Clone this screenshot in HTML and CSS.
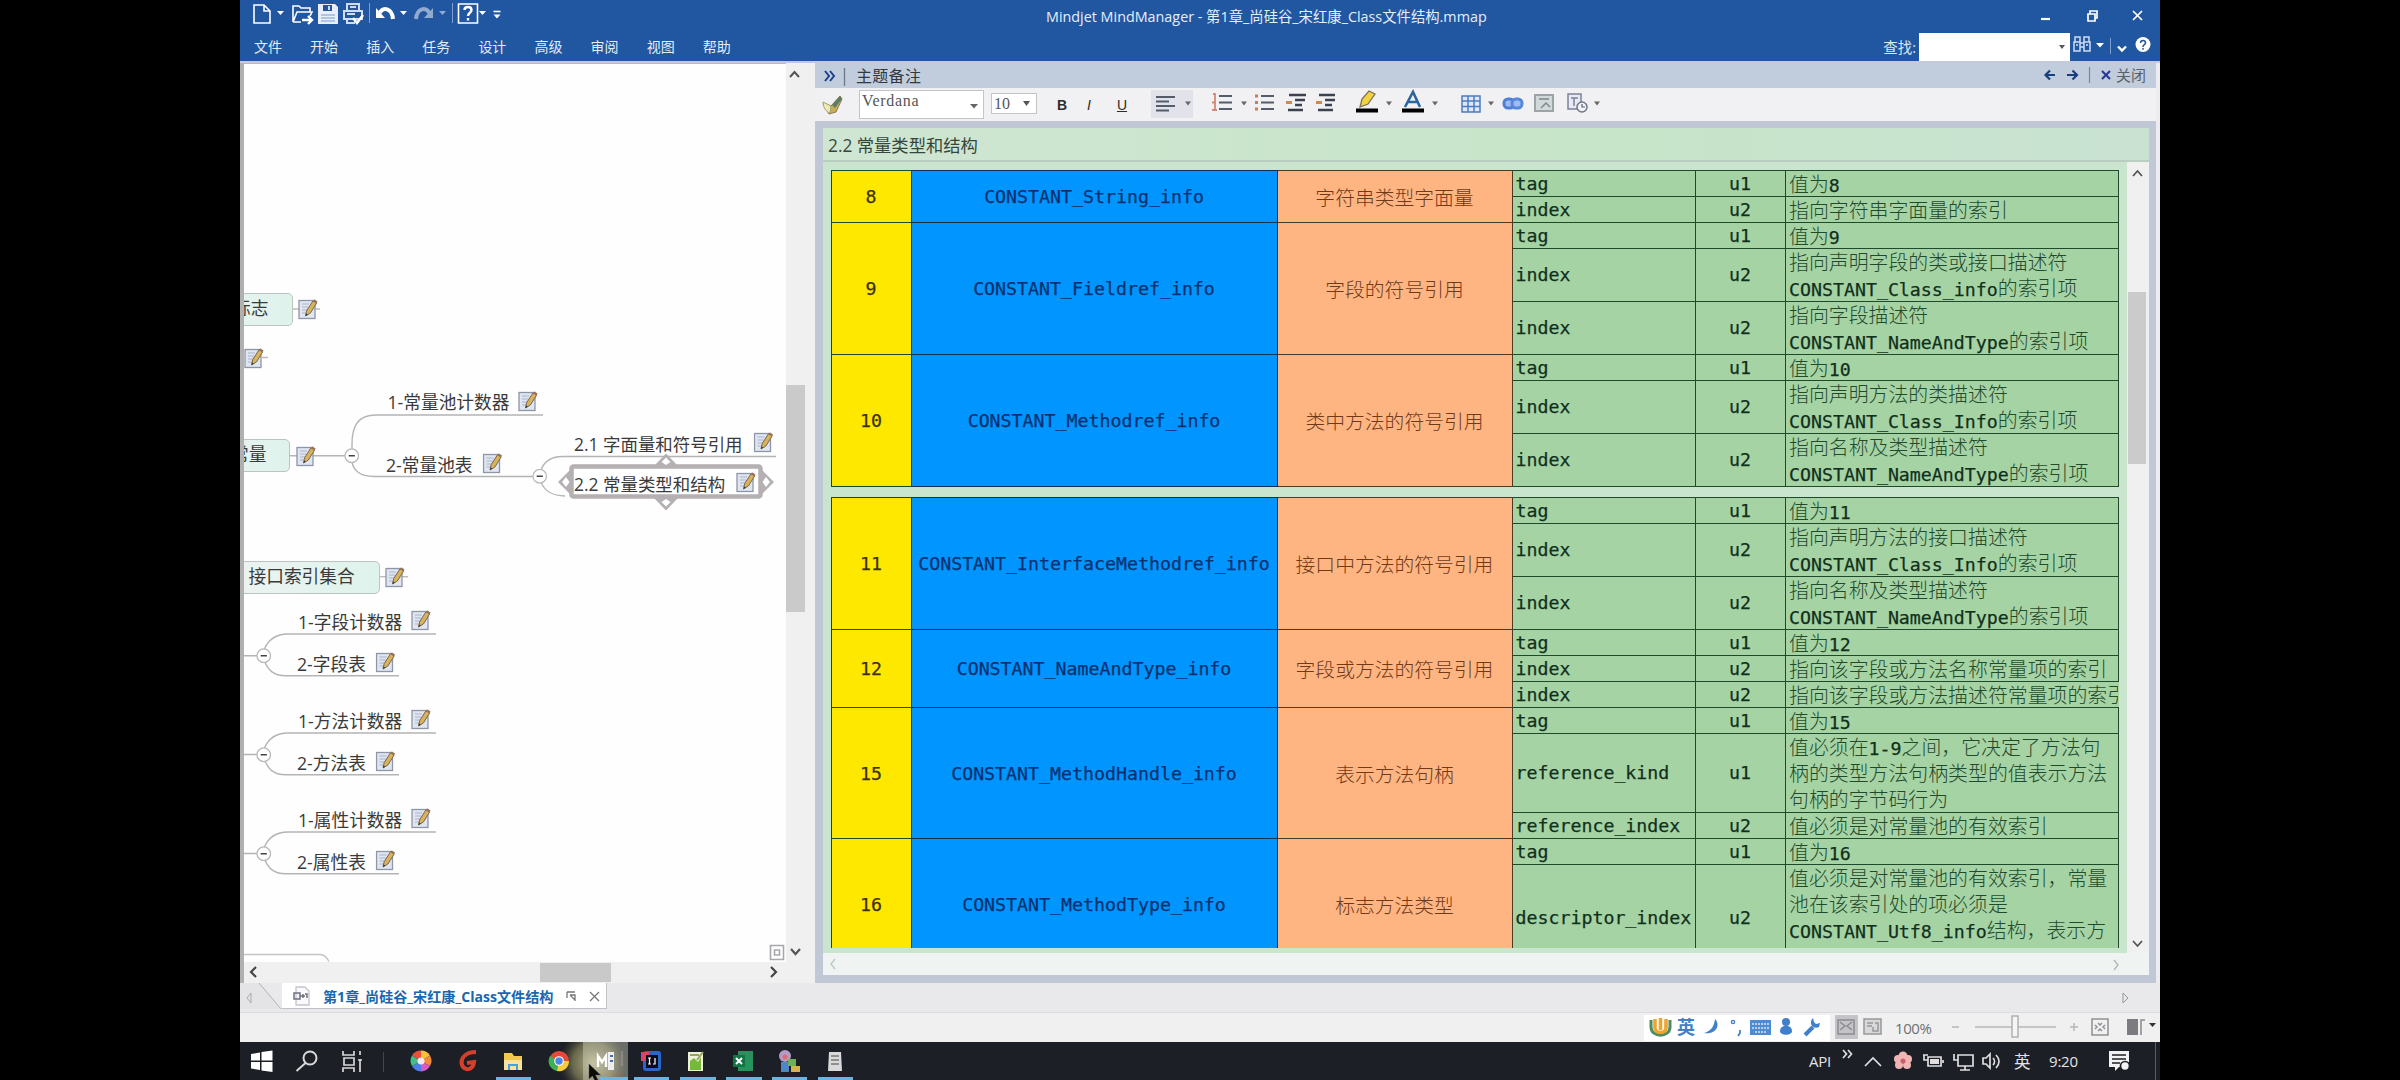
FILE: index.html
```html
<!DOCTYPE html>
<html lang="zh-CN">
<head>
<meta charset="utf-8">
<title>Mindjet MindManager</title>
<link rel="stylesheet" href="styles.css">
</head>
<body>
<svg width="0" height="0" class="defs">
  <defs>
    <symbol id="note" viewBox="0 0 20 21">
      <rect x="1" y="1.5" width="16" height="18" fill="#dfe5f1" stroke="#8e95a6" stroke-width="1.3"/>
      <path d="M4 5h7M4 8h6M4 11h5M4 14h4" stroke="#a9b3cb" stroke-width="1"/>
      <path d="M7.500 17l1.200-5.400L15 1.800l3.600 2.200L12.400 14z" fill="#d9b25c" stroke="#75664f" stroke-width="1"/>
      <path d="M15 2l1.200-1.600 3.400 2-1 1.800z" fill="#a0705a"/>
      <path d="M7.500 17l.6-2.500 1.700 1.100z" fill="#333"/>
    </symbol>
    <symbol id="minus" viewBox="0 0 16 16">
      <circle cx="8" cy="8" r="7" fill="#fff" stroke="#b9b9b9" stroke-width="1.3"/>
      <path d="M4.8 8h6.4" stroke="#444" stroke-width="1.8"/>
    </symbol>
  </defs>
</svg>

<div class="window">
  <header class="ribbon">
    <div class="titlerow">
      <svg class="quick" width="256" height="32" viewBox="0 0 256 32" fill="none" stroke="#fff" stroke-width="1.6">
        <path d="M2 5h10l6 6v12H2zM12 5v6h6"/>
        <path d="M25 11h7l-3.500 4z" fill="#fff" stroke="none"/>
        <path d="M41 22V6h6l2 2h9v4M41 22l4-10h15l-2 4M41 22h8"/>
        <path d="M50 20h9M56 16l4 4-4 4" stroke-width="2.400"/>
        <path d="M66 4h17l3 3v17H66z" fill="#e8effb" stroke="none"/>
        <path d="M71 5h9v6h-9z" fill="#23559f" stroke="none"/><path d="M77 6v4"/><path d="M69 15h14M69 18h14M69 21h14" stroke="#7a99cc" stroke-width="1"/>
        <path d="M95 11V4h12v7M92 11h18v8H92zM95 19v4h8M98 7h6M95 14h8" stroke="#cfdcf2" stroke-width="2"/>
        <path d="M101 18l4 5 6-8" stroke-width="2.600"/>
        <path d="M117.500 3v20" stroke="#7f9fd2" stroke-width="1"/>
        <path d="M127 14c4-8 13-6 14 5" stroke-width="4"/><path d="M124 8v10h9z" fill="#fff" stroke="none"/>
        <path d="M148 11h7l-3.500 4z" fill="#fff" stroke="none"/>
        <g opacity=".5"><path d="M178 14c-4-8-13-6-14 5" stroke-width="4"/><path d="M181 8v10h-9z" fill="#fff" stroke="none"/><path d="M187 11h7l-3.500 4z" fill="#fff" stroke="none"/></g>
        <path d="M200.500 3v20" stroke="#7f9fd2" stroke-width="1"/>
        <path d="M206.500 4h19v19h-19z"/>
        <path d="M212.500 10c0-4 7-4 7 0 0 3-3.500 2.500-3.500 6M216 18v2.500" stroke-width="2.400"/>
        <path d="M227 11h7l-3.500 4zM241.500 14.500h7l-3.500 4z" fill="#fff" stroke="none"/><path d="M241.500 11.500h7"/>
      </svg>
      <div class="apptitle">Mindjet MindManager - 第1章_尚硅谷_宋红康_Class文件结构.mmap</div>
      <svg class="winbtns" width="120" height="32" viewBox="0 0 120 32" fill="none" stroke="#fff" stroke-width="1.700">
        <path d="M1 19h9" stroke-width="2.200"/>
        <path d="M48 14h7v7h-7zM50 14v-3h7v7h-2"/>
        <path d="M93 11l9 9M102 11l-9 9"/>
      </svg>
    </div>
    <div class="menurow">
      <nav class="menu"><span>文件</span><span>开始</span><span>插入</span><span>任务</span><span>设计</span><span>高级</span><span>审阅</span><span>视图</span><span>帮助</span></nav>
      <div class="find">
        <span>查找:</span>
        <div class="findbox"><svg width="8" height="6"><path d="M1 1h6L4 5z" fill="#555"/></svg></div>
        <svg width="86" height="28" viewBox="3 0 86 28" fill="none" stroke="#fff" stroke-width="1.500">
          <path d="M5 4h5v5H5zM14 4h5v5h-5zM4 9h6v9H4zM14 9h6v9h-6zM10 10h4M10 14h4M6 12h2M16 12h2" stroke="#cfdcf2"/>
          <path d="M26 10h8l-4 4.500z" fill="#fff" stroke="none"/>
          <path d="M40.500 5v16" stroke="#7f9fd2" stroke-width="1"/>
          <path d="M48 13.500l4 4 4-4" stroke-width="2.400"/>
          <circle cx="73" cy="11.500" r="7.500" fill="#fff" stroke="none"/>
          <path d="M70.500 10c0-3.500 5-3.500 5 0 0 2-2.500 1.500-2.500 4M73 15v1.800" stroke="#23559f"/>
        </svg>
      </div>
    </div>
  </header>

  <main class="main">
    <section class="mappane">
      <div class="maprow">
        <div class="canvas">
          <svg class="links" width="542" height="899" viewBox="244 63 542 899" fill="none" stroke="#b4b4b4" stroke-width="1.400">
            <path d="M292 309h28M262 357.500h6" stroke="#c2b8b4"/>
            <path d="M290 455.700h62M352 450v-6c0-18 6-29 24-29h167M352 460c0 10 8 16.500 22 16.500h166"/>
            <path d="M541 470c3-8 10-13.500 22-13.500h213M541 482c3 8 11 14 24 14"/>
            <path d="M379 576.700h29" stroke="#c2b8b4"/>
            <path d="M244 655.700h20M264 650c4-10 11-16 24-16h148M264 660c4 10 9 15.700 22 15.700h113"/>
            <path d="M244 754.500h20M264 749c4-10 11-16 24-16h148M264 759c4 10 9 15.700 22 15.700h113"/>
            <path d="M244 853.500h20M264 848c4-10 11-16 24-16h148M264 858c4 10 9 15.700 22 15.700h113"/>
            <path d="M244 954.500h76c5 0 7 3 9 7" stroke="#c4c4c4"/>
            <use href="#minus" x="344" y="448" width="15.500" height="15.500"/>
            <use href="#minus" x="532" y="468.500" width="15.500" height="15.500"/>
            <use href="#minus" x="256" y="648" width="15.500" height="15.500"/>
            <use href="#minus" x="256" y="747" width="15.500" height="15.500"/>
            <use href="#minus" x="256" y="846" width="15.500" height="15.500"/>
            <g fill="#b5b0b3" stroke="none">
              <path d="M571 469l-13 13 13 13zM761 469l13 13-13 13zM654 466l12-12.500 12 12.500zM654 498l12 12.500 12-12.500z"/>
            </g>
            <rect x="571.500" y="466.500" width="189" height="30" rx="2" fill="#fff" stroke="#b5b0b3" stroke-width="4.500"/>
            <path d="M566 477l3.500 5-3.500 5-4-5zM766 477l4 5-4 5-3.500-5zM661.500 462l4.500-4.500 4.500 4.500-4.500 3zM661.500 502l4.500-3 4.500 3-4.500 4.500z" fill="#fff" stroke="none"/>
          </svg>
          <div class="node box n1">标志</div>
          <div class="node box n2">常量</div>
          <div class="node box n3">接口索引集合</div>
          <div class="node n4">1-常量池计数器</div>
          <div class="node n5">2-常量池表</div>
          <div class="node n6">2.1 字面量和符号引用</div>
          <div class="node n7">2.2 常量类型和结构</div>
          <div class="node n8">1-字段计数器</div>
          <div class="node n9">2-字段表</div>
          <div class="node n10">1-方法计数器</div>
          <div class="node n11">2-方法表</div>
          <div class="node n12">1-属性计数器</div>
          <div class="node n13">2-属性表</div>
          <svg class="links" width="542" height="899" viewBox="244 63 542 899">
            <use href="#note" x="298" y="299" width="20" height="21"/>
            <use href="#note" x="244" y="348" width="20" height="21"/>
            <use href="#note" x="296" y="446" width="20" height="21"/>
            <use href="#note" x="518" y="391" width="20" height="21"/>
            <use href="#note" x="482.500" y="453" width="20" height="21"/>
            <use href="#note" x="753.500" y="432" width="20" height="21"/>
            <use href="#note" x="736" y="472" width="20" height="21"/>
            <use href="#note" x="385" y="567" width="20" height="21"/>
            <use href="#note" x="411" y="610" width="20" height="21"/>
            <use href="#note" x="375.500" y="652" width="20" height="21"/>
            <use href="#note" x="411" y="709" width="20" height="21"/>
            <use href="#note" x="375.500" y="751" width="20" height="21"/>
            <use href="#note" x="411" y="808" width="20" height="21"/>
            <use href="#note" x="375.500" y="850" width="20" height="21"/>
            <path d="M770.500 945.500h13v14h-13zM774.500 950h5v5h-5z" fill="none" stroke="#a7a7ad" stroke-width="1.600"/>
          </svg>
        </div>
        <div class="vscroll">
          <svg width="18" height="18" fill="none" stroke="#555" stroke-width="2"><path d="M4 14l4.500-5 4.500 5"/></svg>
          <div class="vthumb"></div>
          <svg class="end" width="18" height="18" fill="none" stroke="#555" stroke-width="2.200"><path d="M5 5l4.500 5L14 5"/></svg>
        </div>
      </div>
      <div class="hscroll">
        <svg width="20" height="20" fill="none" stroke="#444" stroke-width="2.200"><path d="M12 5l-5 5 5 5"/></svg>
        <div class="hthumb"></div>
        <svg class="right" width="20" height="20" fill="none" stroke="#444" stroke-width="2.200"><path d="M7 5l5 5-5 5"/></svg>
      </div>
    </section>

    <section class="notes">
      <div class="nhead">
        <svg width="34" height="24" fill="none" stroke="#1d3f8c" stroke-width="2"><path d="M10 7l4 5-4 5M15 7l4 5-4 5"/><path d="M29.500 4v18" stroke="#6c7788" stroke-width="1.300"/></svg>
        <span class="ntitle">主题备注</span>
        <svg class="nav" width="74" height="24" fill="none" stroke="#173f80" stroke-width="2.200"><path d="M15 12H5M10 7.500L5.500 12l4.500 4.500M27 12h10M32.500 7.500L37 12l-4.500 4.500"/><path d="M49.500 4v16" stroke="#7c8694" stroke-width="1.200"/><path d="M62 8l8 8M70 8l-8 8" stroke="#2a3a94"/></svg>
        <span class="nclose">关闭</span>
      </div>
      <div class="ntools">
        <svg class="brush" width="24" height="24"><path d="M2 10l8 3 9-10 2 3-6 13-7 2z" fill="#c9ad57" stroke="#8b7a4b"/><path d="M2 9l8 4-1 7c-4-1-7-6-7-11z" fill="#eceab8" stroke="#a8a06a"/><path d="M11 12l8-9 2 3-7 9z" fill="#5d7d69"/></svg>
        <div class="combo c1"><span>Verdana</span><svg width="8" height="6"><path d="M0 1h8L4 5.500z" fill="#666"/></svg></div>
        <div class="combo c2"><span>10</span><svg width="8" height="6"><path d="M0 0h7L3.500 5z" fill="#555"/></svg></div>
        <b class="f fb">B</b><i class="f fi">I</i><u class="f fu">U</u>
        <svg class="tools" width="464" height="33" viewBox="1146 88 464 33" fill="none" stroke="#555d6b" stroke-width="2">
          <rect x="1151" y="90" width="42" height="28" fill="#e2e3ea" stroke="none"/>
          <path d="M1156 97h19M1156 101.500h13M1156 106h19M1156 110.500h13"/>
          <path d="M1219 96h13M1219 102.500h13M1219 109h13M1261 96h13M1261 102.500h13M1261 109h13"/>
          <path d="M1213 94h2v16M1212 110h5M1212 102.500h4" stroke="#d28a74" stroke-width="1.800"/>
          <path d="M1255 96h3M1255 102.500h3M1255 109h3" stroke="#c87f55" stroke-width="3"/>
          <path d="M1289 95h17M1295 100h10M1295 105h7M1288 110h15M1319 95h16M1325 100h10M1325 105h7M1318 110h15" stroke="#3c4250" stroke-width="2.400"/>
          <path d="M1292 102.500h-6M1316 102.500h6" stroke="#d1894a" stroke-width="3"/>
          <path d="M1360 107l2-8 7-8 6 3-7 10z" fill="#f0d33f" stroke="#7d715b" stroke-width="1.300"/>
          <path d="M1356 110.500h22M1402 110.500h22" stroke="#000" stroke-width="4"/>
          <path d="M1405 107l8-15 7 15M1408 102h9" stroke="#2a659d" stroke-width="2.600"/>
          <path d="M1462 96h18v16h-18zM1462 101h18M1462 106.500h18M1468 96v16M1474 96v16" stroke="#4e7bbf" stroke-width="1.500" fill="#dce9fb"/>
          <rect x="1504" y="99" width="10" height="9" rx="4" fill="#9dbcf0" stroke="#4d7fd4" stroke-width="3"/><rect x="1512" y="99" width="10" height="9" rx="4" fill="#9dbcf0" stroke="#5587dc" stroke-width="3"/>
          <path d="M1535 95h18v16h-18z" stroke="#9ba5a8" fill="#d2d9d9"/><path d="M1539 99h10M1541 108l5-5 4 4" stroke="#7d898f" stroke-width="1.500"/>
          <path d="M1568 94h13v15h-13zM1571 98h7M1574 98v8" stroke="#7b819a" stroke-width="1.500" fill="#e8ebf5"/><circle cx="1582" cy="107" r="5" fill="#f4f4f8" stroke="#6f7486" stroke-width="1.500"/><path d="M1582 104v3h3" stroke-width="1.200"/>
          <path d="M1185 101.500h6l-3 4zM1241 101.500h6l-3 4zM1386 101.500h6l-3 4zM1432 101.500h6l-3 4zM1488 101.500h6l-3 4zM1594 101.500h6l-3 4z" fill="#666" stroke="none"/>
        </svg>
      </div>
      <div class="nbody">
        <div class="nheading">2.2 常量类型和结构</div>
        <div class="nview">
          <div class="ntables">
            <table>
              <colgroup><col class="k1"><col class="k2"><col class="k3"><col class="k4"><col class="k5"><col class="k6"></colgroup>
              <tr class="h1"><td class="num" rowspan="2">8</td><td class="name" rowspan="2">CONSTANT_String_info</td><td class="desc" rowspan="2">字符串类型字面量</td><td class="fld">tag</td><td class="sz">u1</td><td class="txt">值为<code>8</code></td></tr>
              <tr class="h1"><td class="fld">index</td><td class="sz">u2</td><td class="txt">指向字符串字面量的索引</td></tr>
              <tr class="h1"><td class="num" rowspan="3">9</td><td class="name" rowspan="3">CONSTANT_Fieldref_info</td><td class="desc" rowspan="3">字段的符号引用</td><td class="fld">tag</td><td class="sz">u1</td><td class="txt">值为<code>9</code></td></tr>
              <tr class="h2"><td class="fld">index</td><td class="sz">u2</td><td class="txt">指向声明字段的类或接口描述符<br><code>CONSTANT_Class_info</code>的索引项</td></tr>
              <tr class="h2"><td class="fld">index</td><td class="sz">u2</td><td class="txt">指向字段描述符<br><code>CONSTANT_NameAndType</code>的索引项</td></tr>
              <tr class="h1"><td class="num" rowspan="3">10</td><td class="name" rowspan="3">CONSTANT_Methodref_info</td><td class="desc" rowspan="3">类中方法的符号引用</td><td class="fld">tag</td><td class="sz">u1</td><td class="txt">值为<code>10</code></td></tr>
              <tr class="h2"><td class="fld">index</td><td class="sz">u2</td><td class="txt">指向声明方法的类描述符<br><code>CONSTANT_Class_Info</code>的索引项</td></tr>
              <tr class="h2"><td class="fld">index</td><td class="sz">u2</td><td class="txt">指向名称及类型描述符<br><code>CONSTANT_NameAndType</code>的索引项</td></tr>
            </table>
            <table>
              <colgroup><col class="k1"><col class="k2"><col class="k3"><col class="k4"><col class="k5"><col class="k6"></colgroup>
              <tr class="h1"><td class="num" rowspan="3">11</td><td class="name" rowspan="3">CONSTANT_InterfaceMethodref_info</td><td class="desc" rowspan="3">接口中方法的符号引用</td><td class="fld">tag</td><td class="sz">u1</td><td class="txt">值为<code>11</code></td></tr>
              <tr class="h2"><td class="fld">index</td><td class="sz">u2</td><td class="txt">指向声明方法的接口描述符<br><code>CONSTANT_Class_Info</code>的索引项</td></tr>
              <tr class="h2"><td class="fld">index</td><td class="sz">u2</td><td class="txt">指向名称及类型描述符<br><code>CONSTANT_NameAndType</code>的索引项</td></tr>
              <tr class="h1"><td class="num" rowspan="3">12</td><td class="name" rowspan="3">CONSTANT_NameAndType_info</td><td class="desc" rowspan="3">字段或方法的符号引用</td><td class="fld">tag</td><td class="sz">u1</td><td class="txt">值为<code>12</code></td></tr>
              <tr class="h1"><td class="fld">index</td><td class="sz">u2</td><td class="txt">指向该字段或方法名称常量项的索引</td></tr>
              <tr class="h1"><td class="fld">index</td><td class="sz">u2</td><td class="txt spill">指向该字段或方法描述符常量项的索引</td></tr>
              <tr class="h1"><td class="num" rowspan="3">15</td><td class="name" rowspan="3">CONSTANT_MethodHandle_info</td><td class="desc" rowspan="3">表示方法句柄</td><td class="fld">tag</td><td class="sz">u1</td><td class="txt">值为<code>15</code></td></tr>
              <tr class="h3"><td class="fld">reference_kind</td><td class="sz">u1</td><td class="txt">值必须在<code>1-9</code>之间，它决定了方法句<br>柄的类型方法句柄类型的值表示方法<br>句柄的字节码行为</td></tr>
              <tr class="h1"><td class="fld">reference_index</td><td class="sz">u2</td><td class="txt">值必须是对常量池的有效索引</td></tr>
              <tr class="h1"><td class="num" rowspan="2">16</td><td class="name" rowspan="2">CONSTANT_MethodType_info</td><td class="desc" rowspan="2">标志方法类型</td><td class="fld">tag</td><td class="sz">u1</td><td class="txt">值为<code>16</code></td></tr>
              <tr class="h4"><td class="fld">descriptor_index</td><td class="sz">u2</td><td class="txt top">值必须是对常量池的有效索引，常量<br>池在该索引处的项必须是<br><code>CONSTANT_Utf8_info</code>结构，表示方</td></tr>
            </table>
          </div>
          <div class="nvscroll">
            <svg width="20" height="20" fill="none" stroke="#555" stroke-width="1.800"><path d="M6 14l4.500-5 4.500 5"/></svg>
            <div class="nthumb"></div>
            <svg class="end" width="20" height="20" fill="none" stroke="#555" stroke-width="1.800"><path d="M6 8l4.500 5L15 8"/></svg>
          </div>
        </div>
        <div class="nhscroll">
          <svg width="18" height="20" fill="none" stroke="#bccabf" stroke-width="1.400"><path d="M12 5l-4 5 4 5"/></svg>
          <svg width="18" height="20" fill="none" stroke="#b3b8b8" stroke-width="1.400"><path d="M8 6l4 5-4 5"/></svg>
        </div>
      </div>
    </section>
  </main>

  <div class="tabs">
    <svg class="tableft" width="42" height="26"><path d="M0 0h20l22 26H0z" fill="#e4e4e6"/><path d="M19 0l22 26" stroke="#b5b5b8" fill="none"/><path d="M11 10l-4 5 4 5z" fill="none" stroke="#aaa"/></svg>
    <div class="tab">
      <svg width="20" height="20" fill="none" stroke="#8d8f9c" stroke-width="1.300"><path d="M4 1h9l4 4v14H4z" fill="#fafafc" stroke="#c3c5cd"/><path d="M2 7h6v6H2zM8 10h5M11 8v4M13 8h2v4" stroke="#6f7080" stroke-width="1.500"/></svg>
      <span>第1章_尚硅谷_宋红康_Class文件结构</span>
      <svg class="tabx" width="44" height="20" fill="none" stroke="#777" stroke-width="1.300"><path d="M5 6h8M5 6v6M8 9h5v6M8 9l5 5"/><path d="M28 6l9 9M37 6l-9 9"/></svg>
    </div>
    <svg class="tabright" width="12" height="14"><path d="M3 2l5 5-5 5z" fill="none" stroke="#999"/></svg>
  </div>

  <div class="status">
    <svg class="ime" width="186" height="26" viewBox="1644 1016 186 26" fill="none" stroke="#4080c8" stroke-width="2">
      <path d="M1651 1021v7c0 11 19 11 19 0v-7" stroke="#508a63" stroke-width="3"/>
      <path d="M1655 1020v9c0 6 11 6 11 0v-9M1660.500 1019v12" stroke="#eca52d" stroke-width="3.600"/>
      <text x="1677" y="1035" class="imetext">英</text>
      <path d="M1715 1020c6 6 1 16-11 14 7-2 10-6 11-14z" fill="#4080c8" stroke="none"/>
      <circle cx="1733" cy="1023" r="1.600" stroke-width="1.400"/><path d="M1740 1031v3l-2 3" stroke-width="1.800"/>
      <rect x="1750" y="1021" width="21" height="15" fill="#4f8bd0" stroke="none"/><path d="M1752 1025h17M1752 1029h17M1755 1033h11" stroke="#d6e6f8" stroke-width="1.300" stroke-dasharray="2 1"/>
      <circle cx="1786" cy="1023" r="4" fill="#4080c8" stroke="none"/><path d="M1780 1032c0-7 12-7 12 0 0 5-12 5-12 0z" fill="#4080c8" stroke="none"/>
      <path d="M1805 1036l8-8" stroke-width="4"/><path d="M1813 1019c-5 5 0 12 6 9l1-4-4 1-2-2z" fill="#4080c8" stroke="none"/>
    </svg>
    <svg class="views" width="60" height="26" viewBox="1830 1016 60 26" fill="none" stroke="#97979b" stroke-width="1.500">
      <rect x="1835" y="1016" width="23" height="24" fill="#c4c4c8" stroke="none"/>
      <path d="M1838 1021h16v14h-16zM1840 1023l5 4-5 4M1852 1023l-5 4 5 4" stroke="#8c8c90"/>
      <path d="M1864 1020h17v15h-17zM1867 1024h6M1867 1027h5M1875 1024h3v8h-5v-4" fill="#d8d8da"/>
    </svg>
    <span class="zoom">100%</span>
    <svg class="slider" width="216" height="26" viewBox="1944 1016 216 26" fill="none" stroke="#b7b7b9" stroke-width="1.500">
      <path d="M1952 1028h7M2070 1028h8M2074 1024v8M1975 1028h81"/>
      <rect x="2012" y="1017" width="6" height="21" fill="#f5f5f5" stroke="#b0b0b2"/>
      <path d="M2092 1020h16v16h-16zM2098 1024l2 2 2-2M2098 1032l2-2 2 2M2095 1026l2 2-2 2M2105 1026l-2 2 2 2" stroke="#909094"/>
      <path d="M2127 1020h11v16h-11z" fill="#7b7b80" stroke="none"/><path d="M2141 1036v-15h4" stroke="#88888c"/>
      <path d="M2149 1024h7l-3.500 4z" fill="#333" stroke="none"/>
    </svg>
  </div>

  <footer class="taskbar">
    <svg width="620" height="38" viewBox="240 1042 620 38" fill="none" stroke="#d8d8d8" stroke-width="2">
      <defs><radialGradient id="halo"><stop offset="0" stop-color="#b7b38c"/><stop offset=".6" stop-color="#7c7a55" stop-opacity=".8"/><stop offset="1" stop-color="#4e4e35" stop-opacity="0"/></radialGradient></defs>
      <path d="M251 1054l9-1.500v8h-9zM261.500 1052l11-1.500v10h-11zM251 1062h9v8l-9-1.500zM261.500 1062h11v10l-11-1.500z" fill="#fff" stroke="none"/>
      <circle cx="310" cy="1058" r="6.500"/><path d="M305.500 1063l-9 8"/>
      <path d="M343 1051v4h11v-4M344 1058h10v7h-10zM343 1072v-4h11v4M360 1051v4M360 1059v13M358 1060h4" stroke-width="1.700"/>
      <path d="M383.500 1052v20" stroke="#45454c" stroke-width="1"/>
      <g stroke="none">
        <path d="M421 1061L421 1050.500a10.500 10.500 0 0 1 9 5z" fill="#f5c13c"/><path d="M421 1061l9-5.500a10.500 10.500 0 0 1 0 10.500z" fill="#f58b3a"/><path d="M421 1061l9 5a10.500 10.500 0 0 1-9 5.500z" fill="#d95ac4"/><path d="M421 1061v10.500a10.500 10.500 0 0 1-9-5.500z" fill="#4a7ee8"/><path d="M421 1061l-9 5a10.500 10.500 0 0 1 0-10.500z" fill="#45bf8a"/><path d="M421 1061l-9-5.500a10.500 10.500 0 0 1 9-5z" fill="#e8503c"/><circle cx="421" cy="1061" r="3.500" fill="#f4e9ee"/>
      </g>
      <path d="M476 1052c-10 0-16 6-14 13 2 6 11 6 12-3l-7 1" stroke="#d4402a" stroke-width="4"/>
      <path d="M504 1053h8l2 3h8v14h-18z" fill="#f2c94e" stroke="none"/><path d="M504 1060h18v10h-18z" fill="#fbe29a" stroke="none"/><path d="M509 1070v-5h8v5" stroke="#4a9de0"/>
      <circle cx="593" cy="1063" r="34" fill="url(#halo)" stroke="none"/>
      <rect x="583" y="1042" width="45" height="38" fill="#d9d9c6" fill-opacity=".42" stroke="none"/>
      <g stroke="none"><circle cx="559" cy="1061" r="10" fill="#e5493a"/><path d="M559 1061l-9-5a10 10 0 0 0 7 15z" fill="#3fae55"/><path d="M559 1061h10a10 10 0 0 1-12 10z" fill="#f5cc3e"/><circle cx="559" cy="1061" r="4.800" fill="#fff"/><circle cx="559" cy="1061" r="3.700" fill="#4a86e8"/></g>
      <path d="M598 1067v-11l4 6 4-6v11" stroke="#fff" stroke-width="2.400"/><path d="M608 1052h6v18h-6z" fill="#eee" stroke="none"/><path d="M610 1056h3M610 1061h3" stroke="#4b6ea8"/>
      <path d="M622 1051v15" stroke="#8a8a84"/>
      <rect x="643" y="1051" width="18" height="20" rx="3" fill="#2b66c9" stroke="none"/><path d="M641 1052h8v9h-8z" fill="#d84568" stroke="none"/><path d="M646 1055h12v13h-12z" fill="#0c0c18" stroke="none"/><path d="M648 1058h3M649.500 1058v6M648 1064h3M655 1058v6h-2" stroke="#fff" stroke-width="1.200"/>
      <path d="M688 1052h15v19h-15z" fill="#eef2dc" stroke="none"/><path d="M690 1070v-9l4-3 4 4 3-5v13z" fill="#76b83a" stroke="none"/><path d="M690 1055h9M697 1060l6-8" stroke="#98a45c"/>
      <path d="M738 1051h15v20h-15z" fill="#26935c" stroke="none"/><path d="M733 1055h12v12h-12z" fill="#127343" stroke="none"/><path d="M736 1058l6 6M742 1058l-6 6" stroke="#fff"/>
      <g stroke="none"><circle cx="785" cy="1056" r="6" fill="#b59ac7"/><path d="M781 1062h8v10h-8z" fill="#4f86c9"/><path d="M788 1059h8v7h-8z" fill="#6eb05a"/><path d="M791 1066h9v6h-9z" fill="#d8b44b"/><circle cx="785" cy="1057" r="2.500" fill="#e06d6d"/></g>
      <path d="M829 1052h12l1 19h-14z" fill="#d9d9d9" stroke="none"/><path d="M831 1056h8M831 1060h8M831 1064h8" stroke="#777" stroke-width="1.400"/>
      <path d="M496 1078.500h35M600 1078.500h28M634 1078.500h35M680 1078.500h36M726 1078.500h36M772 1078.500h35M818 1078.500h35" stroke="#6db5e0" stroke-width="3"/>
      <path d="M589 1064v15l3.500-3 3 6 3-1-3-6h5z" fill="#0a0a0a" stroke="#555" stroke-width=".5"/>
    </svg>
    <div class="tray">
      <span class="api">API</span>
      <svg width="175" height="38" viewBox="1836 1042 175 38" fill="none" stroke="#e0e0e0" stroke-width="1.700">
        <path d="M1843 1050l3.500 4-3.500 4M1848 1050l3.500 4-3.500 4"/>
        <path d="M1865 1066l8-8 8 8"/>
        <g fill="#f0b4b4" stroke="none"><circle cx="1903" cy="1056" r="4.500"/><circle cx="1898" cy="1059" r="4"/><circle cx="1908" cy="1059" r="4"/><circle cx="1899" cy="1065" r="4"/><circle cx="1907" cy="1065" r="4"/><circle cx="1903" cy="1061" r="2.500" fill="#c95f68"/></g>
        <path d="M1928 1057h13v9h-13zM1943 1060v3M1924 1055v5h4M1923 1055h5"/><path d="M1930 1059h9v5h-9z" fill="#e0e0e0" stroke="none"/>
        <path d="M1958 1055h15v11h-15zM1965 1066v4M1960 1070h10M1954 1054v6h4"/>
        <path d="M1983 1058h3l4-4v14l-4-4h-3zM1993 1058c2 2 2 5 0 7M1996 1055c4 4 4 9 0 13"/>
      </svg>
      <span class="lang">英</span><span class="clock">9:20</span>
      <svg width="56" height="38" viewBox="2104 1042 56 38" fill="none" stroke="#1c1f26" stroke-width="1.700"><path d="M2109 1051h20v16h-10l-4 4v-4h-6z" fill="#f2f2f2" stroke="none"/><path d="M2112 1055h14M2112 1059h14M2112 1063h8"/><circle cx="2125" cy="1066" r="4.500" fill="#f2f2f2"/><path d="M2155.500 1042v38" stroke="#5b5d63" stroke-width="1"/></svg>
    </div>
  </footer>
</div>
</body>
</html>
```
FILE: styles.css
```css
* { box-sizing: border-box; }
body {
  margin: 0;
  background: #000;
  font-family: "Open Sans", "Noto Sans CJK SC", sans-serif;
  overflow: hidden;
}
.defs { display: block; position: absolute; }
svg { display: block; flex: none; }
.window {
  width: 1920px;
  height: 1080px;
  margin: 0 auto;
  display: flex;
  flex-direction: column;
  background: #f0f0f0;
}

/* ribbon */
.ribbon { height: 61px; background: #2156a0; color: #fff; flex: none; }
.titlerow { height: 32px; display: flex; align-items: center; padding-left: 12px; }
.apptitle {
  margin: -2px 0 0 538px;
  width: 460px;
  font-size: 14.35px;
  color: #e6eefa;
  white-space: nowrap;
}
.quick { margin-top: 0; }
.winbtns { margin-left: 534px; }
.menurow { height: 29px; display: flex; align-items: center; justify-content: space-between; padding-left: 14px; }
.menu { display: flex; gap: 28.1px; font-size: 14px; color: #e4ecf8; line-height: 28px; }
.find { display: flex; align-items: center; font-size: 14.500px; color: #dbe6f6; gap: 3px; margin-right: 1px; }
.findbox { width: 151px; height: 28px; background: #fff; display: flex; align-items: center; justify-content: flex-end; padding-right: 4px; }

/* map pane */
.main { height: 922px; flex: none; display: flex; border-top: 2px solid #c3cbdb; background: #ececf0; }
.mappane { width: 575px; display: flex; flex-direction: column; border-left: 4px solid #b0b0b0; background: #f0f0f0; }
.maprow { height: 899px; display: flex; }
.canvas { position: relative; width: 542px; height: 899px; background: #fefefe; overflow: hidden; border-top: 1px solid #b8bcc4; }
.links { position: absolute; left: 0; top: -1px; }
.node {
  position: absolute;
  height: 26px;
  line-height: 26px;
  font-size: 17.700px;
  color: #3a3a3a;
  white-space: nowrap;
}
.box {
  height: 33px;
  line-height: 29px;
  border: 1.500px solid #bcc4c1;
  border-radius: 5px;
  background: linear-gradient(90deg, #eef3f1, #def3eb);
}
.n1 { left: -60px; top: 229px; width: 109px; padding-left: 48px; }
.n2 { left: -60px; top: 375px; width: 106px; padding-left: 46px; }
.n3 { left: -20px; top: 497px; width: 156px; padding-left: 23.500px; }
.n4 { left: 143.500px; top: 325px; }
.n5 { left: 142px; top: 388px; }
.n6 { left: 330px; top: 367px; font-size: 17.450px; }
.n7 { left: 330px; top: 407px; font-size: 17.450px; }
.n8 { left: 54px; top: 545px; }
.n9 { left: 53px; top: 587px; }
.n10 { left: 54px; top: 644px; }
.n11 { left: 53px; top: 686px; }
.n12 { left: 54px; top: 743px; }
.n13 { left: 53px; top: 785px; }
.vscroll { width: 19px; display: flex; flex-direction: column; }
.vthumb { height: 227px; margin-top: 304px; background: #cacaca; }
.vscroll .end { margin-top: auto; margin-bottom: 0; }
.hscroll { height: 20px; display: flex; align-items: center; width: 560px; background: #f0f0f0; }
.hthumb { width: 71px; height: 19px; margin-left: 276px; background: #c9c9c9; }
.hscroll .right { margin-left: 153px; }

/* notes pane */
.notes { width: 1341px; background: #c0c8d6; display: flex; flex-direction: column; }
.nhead { height: 25px; display: flex; align-items: center; color: #33383f; font-size: 16px; background: #c1cddd; }
.ntitle { margin: -2px 0 0 7px; letter-spacing: .3px; }
.nhead .nav { margin-left: auto; margin-top: -1px; }
.nclose { font-size: 15px; margin: -2px 10px 0 -2px; color: #5a6068; padding-left: 4px; }
.ntools { height: 33px; display: flex; align-items: center; background: #f1f1f3; padding-left: 6px; }
.brush { margin-right: 14px; }
.combo { display: flex; justify-content: space-between; background: #fff; border: 1px solid #c5c5c9; font-family: "Liberation Serif", serif; font-size: 16px; color: #555; padding: 0 5px 0 2px; }
.c1 { width: 125px; height: 29px; align-items: center; letter-spacing: .7px; }
.c1 span { margin-top: -8px; }
.c1 svg { margin-top: 2px; }
.c2 { width: 46px; height: 21px; margin: -2px 0 0 7px; align-items: center; }
.f { width: 20px; text-align: center; font-size: 14px; color: #2c2c2c; font-family: "Liberation Sans", sans-serif; }
.fb { margin-left: 15px; }
.fi { margin-left: 7px; }
.fu { margin-left: 13px; }
.tools { margin-left: 14px; }
.nbody { margin: 7px 7px 0 8px; height: 847px; background: #c9e5cd; display: flex; flex-direction: column; }
.nheading { height: 34px; line-height: 35px; padding-left: 5px; font-size: 17.300px; color: #37463c; border-bottom: 2px solid #b9cdc0; background: linear-gradient(90deg, #cfe6d2, #c7e5c9 60%, #c9e2d2); }
.nview { height: 791px; display: flex; }
.ntables { width: 1298px; height: 786px; padding: 8px 0 0 7.500px; overflow: hidden; }
table {
  width: 1287.500px;
  table-layout: fixed;
  border-collapse: collapse;
  margin-bottom: 10px;
}
td { border: 1.500px solid #1d4a2b; padding: 0; background: #a6d3a4; line-height: 26px; white-space: nowrap; font-family: "Noto Sans CJK SC", sans-serif; font-weight: 300; font-size: 19.900px; color: #1f4a2c; overflow: hidden; }
.k1 { width: 80px; }
.k2 { width: 366px; }
.k3 { width: 235px; }
.k4 { width: 183px; }
.k5 { width: 90px; }
.k6 { width: 333px; }
.h1 { height: 26px; }
.h1 td { line-height: 25px; }
.h2 { height: 53px; }
.h3 { height: 79px; }
.h4 { height: 106px; }
code, td.num, td.name, td.fld, td.sz { font-family: "DejaVu Sans Mono", monospace; font-weight: 400; font-size: 18.250px; color: #10301c; -webkit-text-stroke: .25px currentColor; }
code { line-height: 1; }
td.num { background: #ffe800; text-align: center; color: #3b3000; }
td.name { background: #0095ff; text-align: center; color: #06306e; border-color: #0c3350; }
td.desc { background: #ffb582; text-align: center; font-size: 19.800px; color: #6e3a1a; border-color: #4c3a28; }
td.fld { padding-left: 3px; }
td.sz { text-align: center; }
td.txt { padding-left: 3.500px; }
td.top { vertical-align: top; }
td.spill { border-right-color: #a6d3a4; }
.nvscroll { width: 22px; margin-left: 6px; background: #f0f0f0; display: flex; flex-direction: column; }
.nthumb { width: 18px; height: 172px; margin: 110px 0 0 1px; background: #cbcbcb; }
.nvscroll .end { margin-top: auto; }
.nhscroll { height: 22px; display: flex; justify-content: space-between; align-items: center; background: #eff3f1; padding: 0 25px 0 0; }

/* document tabs */
.tabs { height: 30px; flex: none; display: flex; background: #e9e9ec; border-bottom: 1px solid #dcdce0; }
.tab { height: 26px; width: 325px; display: flex; align-items: center; background: #fff; color: #1b66ad; font-size: 14.100px; font-weight: 700; padding-left: 10px; border-right: 1px solid #c2c2c6; border-bottom: 1px solid #c2c2c6; white-space: nowrap; }
.tab span { margin: 0 10px 0 11px; width: 229px; }
.tabright { margin: 8px 28px 0 auto; }

/* status bar */
.status { height: 29px; flex: none; display: flex; align-items: center; justify-content: flex-end; background: #f0f0f1; }
.ime { background: #fff; }
.imetext { font: 700 18px "Noto Sans CJK SC", sans-serif; fill: #4080c8; stroke: none; }
.zoom { width: 54px; padding-left: 5px; font-size: 15px; color: #6f6f73; letter-spacing: -.4px; }

/* taskbar */
.taskbar { height: 38px; flex: none; display: flex; justify-content: space-between; background: #1d1f27; color: #e4e4e4; }
.tray { display: flex; align-items: center; font-size: 15px; }
.api { width: 27px; letter-spacing: -.3px; }
.lang { width: 38px; padding-left: 3px; font-size: 16.500px; }
.clock { width: 55px; letter-spacing: -.2px; }
```
